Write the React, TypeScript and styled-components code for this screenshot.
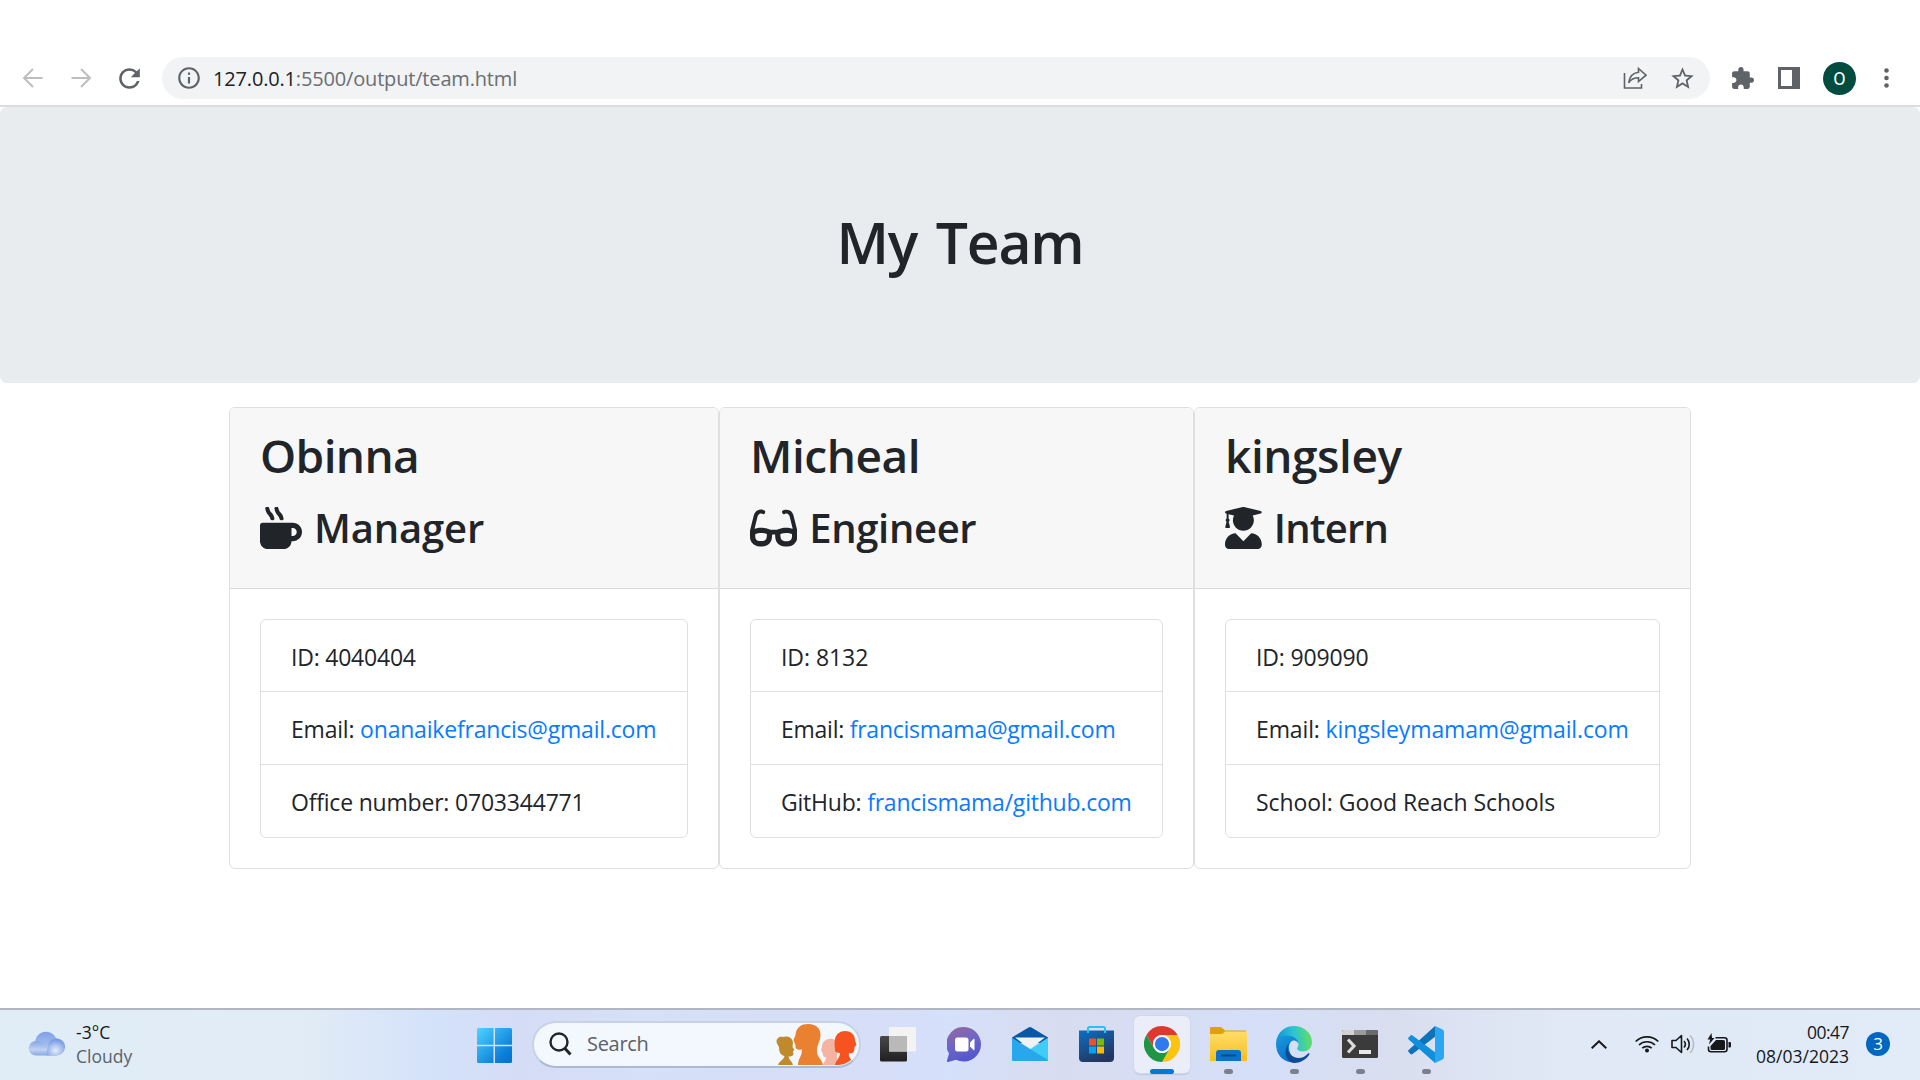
import React from "react";
import styled, { createGlobalStyle } from "styled-components";
import { FaMugHot, FaGlasses, FaUserGraduate } from "react-icons/fa";
import { MdRefresh, MdInfoOutline, MdStarBorder, MdExtension } from "react-icons/md";

const GlobalStyle = createGlobalStyle`
  * { box-sizing: border-box; }
  body { margin: 0; background: #fff; font-family: "Open Sans", "Noto Sans", sans-serif; color: #212529; }
  svg { display: block; flex: none; }
`;

const Screen = styled.div`
  width: 1920px;
  height: 1080px;
  display: flex;
  flex-direction: column;
  overflow: hidden;
`;

/* Browser toolbar */
const Toolbar = styled.header`
  height: 107px;
  flex: none;
  display: flex;
  align-items: center;
  padding: 57px 24px 6px 22px;
  border-bottom: 2px solid #dadcdf;
  color: #5f6368;
`;
const NavButtons = styled.nav`
  display: flex;
  align-items: center;
  width: 140px;
  gap: 26px;
  color: #bcbec0;
`;
const ReloadButton = styled.span`
  color: #5f6368;
  margin-left: -4px;
`;
const Omnibox = styled.div`
  width: 1548px;
  height: 42px;
  display: flex;
  align-items: center;
  padding: 0 14px 0 14px;
  border-radius: 21px;
  background: #f1f3f4;
`;
const Url = styled.span`
  flex: 1;
  margin: 1px 0 0 11px;
  font-size: 20px;
  line-height: 28px;
  letter-spacing: -0.17px;
  color: #6a6e73;
`;
const Host = styled.span`
  color: #202124;
`;
const OmniActions = styled.div`
  display: flex;
  align-items: center;
  gap: 22px;
`;
const ToolbarActions = styled.div`
  flex: 1;
  display: flex;
  align-items: center;
  justify-content: space-between;
  padding: 0 7px 0 20px;
`;
const Avatar = styled.span`
  width: 33px;
  height: 33px;
  border-radius: 50%;
  background: #004d40;
  color: #fff;
  font: 18px/33px Roboto, sans-serif;
  text-align: center;
  margin-right: 5px;
`;

/* Page */
const Jumbotron = styled.section`
  height: 276px;
  flex: none;
  padding-top: 99px;
  border-radius: 7px;
  background: #e9ecef;
`;
const PageTitle = styled.h1`
  margin: 0;
  font-size: 57px;
  line-height: 72px;
  font-weight: 600;
  letter-spacing: -1.2px;
  word-spacing: 5px;
  text-align: center;
`;
const Team = styled.main`
  flex: 1;
  display: flex;
  align-items: flex-start;
  padding: 24px 0 0 229px;
`;
const Card = styled.article<{ $width: number }>`
  width: ${(p) => p.$width}px;
  border: 1px solid #dfdfdf;
  border-radius: 6px;
  overflow: hidden;
`;
const CardHeader = styled.div`
  height: 181px;
  padding: 18px 30px 0;
  background: #f7f7f7;
  border-bottom: 1px solid #dadada;
`;
const Name = styled.h2<{ $track: number }>`
  margin: 0 0 19px;
  font-size: 46px;
  line-height: 58px;
  font-weight: 600;
  letter-spacing: ${(p) => p.$track}px;
`;
const Role = styled.h3<{ $track: number; $iconWidth: number }>`
  display: flex;
  align-items: center;
  gap: 12px;
  margin: 0;
  height: 50px;
  font-size: 40px;
  line-height: 50px;
  font-weight: 600;
  letter-spacing: ${(p) => p.$track}px;
  svg { width: ${(p) => p.$iconWidth}px; height: 42px; }
`;
const Details = styled.ul`
  list-style: none;
  margin: 30px;
  padding: 0;
  border: 1px solid #dfdfdf;
  border-radius: 6px;
`;
const Detail = styled.li<{ $track: number }>`
  height: 73px;
  padding: 2px 29px 0 30px;
  border-top: 1px solid #dfdfdf;
  font-size: 23px;
  line-height: 71px;
  letter-spacing: ${(p) => p.$track}px;
  white-space: nowrap;
  &:first-child { border-top: 0; height: 71px; }
`;
const Link = styled.a`
  color: #0a7aff;
`;

/* Taskbar */
const Taskbar = styled.footer`
  height: 72px;
  flex: none;
  display: flex;
  align-items: center;
  border-top: 2px solid #b0b7c3;
  background: linear-gradient(90deg, #e0edf6 0, #e2ecf6 300px, #d4e2fa 430px, #d5dcf6 520px, #d6e0f9 640px, #d7def7 850px, #d5e0fa 950px, #d8dcef 1060px, #d5dff8 1260px, #d9deef 1390px, #e0e9f5 1560px, #e1ecf8 1920px);
  color: #16181b;
  font-size: 17.5px;
  line-height: 24px;
`;
const Weather = styled.div`
  width: 477px;
  display: flex;
  align-items: center;
  gap: 11px;
  padding-left: 28px;
  padding-bottom: 3px;
`;
const Lines = styled.div<{ $align?: string }>`
  text-align: ${(p) => p.$align || "left"};
`;
const Muted = styled.div`
  color: #5b636b;
`;
const Time = styled.div`
  letter-spacing: -0.5px;
`;
const SearchBox = styled.div`
  width: 329px;
  height: 47px;
  margin: -2px 9px 0 20px;
  display: flex;
  align-items: center;
  padding: 0 2px 0 15px;
  border: 2px solid #c6d2e6;
  border-bottom-color: #adb9d0;
  border-radius: 24px;
  background: #f3f7fe;
  overflow: hidden;
`;
const SearchLabel = styled.span`
  flex: 1;
  margin-left: 15px;
  font-size: 20px;
  letter-spacing: -0.3px;
  color: #5d6066;
`;
const Apps = styled.div`
  display: flex;
  gap: 10px;
  margin-bottom: 2px;
`;
const AppTile = styled.div<{ $active?: boolean }>`
  position: relative;
  width: 56px;
  height: 57px;
  display: flex;
  align-items: center;
  justify-content: center;
  border-radius: 6px;
  background: ${(p) => (p.$active ? "#ebeef9" : "transparent")};
  box-shadow: ${(p) => (p.$active ? "0 0 0 1px #d0d7e8, 0 2px 1px #bfc8d9" : "none")};
`;
const Running = styled.i<{ $active?: boolean }>`
  position: absolute;
  bottom: -1px;
  width: ${(p) => (p.$active ? 24 : 9)}px;
  height: 5px;
  border-radius: 3px;
  background: ${(p) => (p.$active ? "#0078d7" : "#7c808c")};
`;
const Tray = styled.div`
  margin-left: auto;
  padding-right: 30px;
  padding-bottom: 2px;
  display: flex;
  align-items: center;
`;
const TrayIcons = styled.div`
  display: flex;
  align-items: center;
  gap: 12px;
  margin: 0 25px 0 28px;
`;
const Badge = styled.span`
  width: 24px;
  height: 24px;
  margin-left: 17px;
  border-radius: 50%;
  background: #0067c0;
  color: #fff;
  font-size: 17px;
  line-height: 24px;
  text-align: center;
`;

const Arrow = ({ flip }: { flip?: boolean }) => (
  <svg width="22" height="22" viewBox="0 0 22 22" fill="none" stroke="currentColor" strokeWidth="2" transform={flip ? "scale(-1 1)" : undefined}>
    <path d="M20.5 11H3M11 2 2 11l9 9" />
  </svg>
);
const ShareIcon = () => (
  <svg width="24" height="24" viewBox="0 0 24 24" fill="none" stroke="#5f6368" strokeWidth="1.6">
    <path d="M1.500 7v15h17v-4" />
    <path d="M15.500 2.500 23 9.200l-7.500 6.400v-3.800c-4.700 0-7.700 1.600-9.800 5C6.300 11 9.300 7 15.500 6.200z" strokeLinejoin="miter" />
  </svg>
);
const CloudIcon = () => (
  <svg width="37" height="25" viewBox="0 0 37 25">
    <defs>
      <linearGradient id="cl" x2="0" y2="1"><stop stopColor="#7fa0e6" /><stop offset="1" stopColor="#b8cdf0" /></linearGradient>
      <linearGradient id="cf" x2="0" y2="1"><stop stopColor="#86a6ea" /><stop offset=".6" stopColor="#c0d2f0" /><stop offset="1" stopColor="#87a8e8" /></linearGradient>
      <radialGradient id="cr" cx=".5" cy=".7" r=".6"><stop stopColor="#e4edfa" /><stop offset="1" stopColor="#7b9ce4" /></radialGradient>
    </defs>
    <circle cx="18" cy="11.500" r="10.800" fill="url(#cl)" />
    <path d="M8 10c4 0 6 2 8 4h13v10.500H8A7.200 7.200 0 0 1 8 10" fill="url(#cf)" />
    <path d="M20 14.500a8.600 8.600 0 1 1 8 10H18z" fill="url(#cr)" />
  </svg>
);
const StartIcon = () => (
  <svg width="35" height="35" viewBox="0 0 35 35">
    <defs><linearGradient id="win" x2="1" y2="1"><stop stopColor="#4fd4ff" /><stop offset=".75" stopColor="#0a7fd9" /><stop offset="1" stopColor="#0072cf" /></linearGradient></defs>
    <path fill="url(#win)" d="M1.500 0h15v16.800H0V1.500A1.500 1.500 0 0 1 1.500 0M18 0h15.500A1.500 1.500 0 0 1 35 1.500v15.300H18zM0 18.200h16.500V35h-15A1.500 1.500 0 0 1 0 33.500zm18 0h17v15.300a1.500 1.500 0 0 1-1.500 1.500H18z" />
  </svg>
);
const SearchIcon = () => (
  <svg width="23" height="24" viewBox="0 0 23 24" fill="none" stroke="#222426" strokeWidth="2.400">
    <circle cx="10" cy="10" r="8.500" /><path d="m15.500 16 6 6.500" strokeWidth="3" />
  </svg>
);
const PeopleArt = () => (
  <svg width="81" height="41" viewBox="0 0 81 41">
    <path fill="#c0892b" d="M2 41c1-4 6-5 6.500-9C4 31 3 27 3 23 2 21 1 20 .5 18c0-4 3-6 6.500-5 4-1.500 9 0 10 5l-.5 5 2 3-1.500 1 .5 3c-.5 2-2 2.500-5 2.500.5 4 4 5 4.500 8.500z" />
    <path fill="#f5b3a2" d="M47 41c.5-3 3-4 3-8-3 0-3-1-3-3l-2-4 1-3c0-6 5-9 11-8l4 2v24z" />
    <path fill="#e98130" d="M22 41c0-7 4-8 4-15.500-4 1-7 0-6.500-4L17.500 16l2-5C20 3 26 0 32 0c9 0 13 5.500 12.500 12-.5 6-4 9-3.500 16 0 5 5 7 6 13z" />
    <path fill="#f65321" d="M59 41c1-5 5-7 5-12-3 0-4-1-5-2 0-4-1-7 0-12 1-5 5-8 10-8s10 3 10 9l1.500 5-2 2c0 5-1 7-5.500 6-1 4 2 5 2 7-4 3-8 5-16 5" />
  </svg>
);
const TaskViewIcon = () => (
  <svg width="36" height="35" viewBox="0 0 36 35">
    <defs><linearGradient id="tv" x2="0" y2="1"><stop stopColor="#484848" /><stop offset="1" stopColor="#202020" /></linearGradient></defs>
    <rect y="9" width="27" height="25.500" rx="1.500" fill="url(#tv)" />
    <rect x="9" width="27" height="24.500" rx="1" fill="#f3f3f3" />
    <path d="M9 9h18v15.500H9z" fill="#b9b9b9" />
  </svg>
);
const ChatIcon = () => (
  <svg width="34" height="35" viewBox="0 0 34 35">
    <defs><linearGradient id="ch" x1=".2" x2=".6" y2="1"><stop stopColor="#94689f" /><stop offset=".5" stopColor="#6c65c9" /><stop offset="1" stopColor="#5056cc" /></linearGradient></defs>
    <path fill="url(#ch)" d="M17 0a17.300 17.300 0 1 1-8 32.800L1 35c-1 .3-1.500-.5-1-1.500l2-7A17.300 17.300 0 0 1 17 0" />
    <rect x="8" y="10.500" width="13.500" height="14" rx="2.500" fill="#fff" />
    <path d="m23 15.500 3.500-3.500c.8-.6 1-.2 1 .5v10c0 .7-.2 1-1 .5L23 19.500z" fill="#fff" />
  </svg>
);
const MailIcon = () => (
  <svg width="36" height="34" viewBox="0 0 36 34">
    <path fill="#0a57a8" d="M0 10.500 16.500.5q1.500-1 3 0L36 10.500V16H0z" />
    <path fill="#f1f2f4" d="M3 10.500h30L18 22z" />
    <path fill="#40cdf5" d="M36 10.800V34L17 23z" />
    <path fill="#28a8ea" d="M0 10.800 36 33q0 1-1 1H1q-1 0-1-1z" />
  </svg>
);
const StoreIcon = () => (
  <svg width="35" height="36" viewBox="0 0 35 36">
    <defs><linearGradient id="st" x2=".5" y2="1"><stop stopColor="#0c6fc6" /><stop offset="1" stopColor="#23365f" /></linearGradient></defs>
    <path fill="url(#st)" d="M0 4.500h35V32q0 4-4 4H4q-4 0-4-4z" />
    <path d="M9 7V2.500Q9 1 10.500 1h14Q26 1 26 2.500V7" fill="none" stroke="#2cc0f5" strokeWidth="2" />
    <path fill="#f25022" d="M10 12.500h7v7h-7z" /><path fill="#7fba00" d="M18 12.500h7v7h-7z" />
    <path fill="#00a4ef" d="M10 20.500h7v7h-7z" /><path fill="#ffb900" d="M18 20.500h7v7h-7z" />
  </svg>
);
const ChromeIcon = () => (
  <svg width="36" height="36" viewBox="0 0 48 48">
    <path fill="#dd3a2f" d="M24 0c8.900 0 16.600 4.800 20.800 12H24a12 12 0 0 0-10.400 18L3.200 12A24 24 0 0 1 24 0" />
    <path fill="#fdc40e" d="M44.800 12A24 24 0 0 1 24 48l10.400-18A12 12 0 0 0 24 12z" />
    <path fill="#209547" d="M24 48A24 24 0 0 1 3.200 12l10.400 18a12 12 0 0 0 20.800 0z" />
    <circle cx="24" cy="24" r="12" fill="#fff" /><circle cx="24" cy="24" r="9.500" fill="#2f7aec" />
  </svg>
);
const FolderIcon = () => (
  <svg width="37" height="34" viewBox="0 0 37 34">
    <defs><linearGradient id="fo" x2="0" y2="1"><stop stopColor="#ffdd6b" /><stop offset="1" stopColor="#f9bd1d" /></linearGradient></defs>
    <path fill="#dfa009" d="M0 1q0-1 1-1h10l4 3.500h21v7H0z" />
    <path fill="url(#fo)" d="M0 7h11q2 0 4-2.500h21q1 0 1 1V33q0 1-1 1H1q-1 0-1-1z" />
    <path fill="#0c71c7" d="M6 34V26q0-3 3-3h19q3 0 3 3v8z" />
    <path stroke="#08467f" strokeWidth="1.800" d="M11 28.500h15" />
  </svg>
);
const EdgeIcon = () => (
  <svg width="36" height="37" viewBox="0 0 36 37">
    <defs>
      <linearGradient id="e1" y1=".5" x2="1" y2=".4"><stop stopColor="#1492d8" /><stop offset=".5" stopColor="#2cc3d5" /><stop offset="1" stopColor="#63e05c" /></linearGradient>
      <linearGradient id="e2" x2=".5" y2="1"><stop stopColor="#1a9bdc" /><stop offset="1" stopColor="#0a6fc9" /></linearGradient>
    </defs>
    <path fill="url(#e1)" d="M0 17C1 6 9 0 18 0c10 0 18 7 18 16 0 6-4 9.500-9 9.500-4 0-6-1.500-6-3 0-1 1.500-2 1.500-4 0-3-3-6-6-6z" />
    <path fill="url(#e2)" d="M0 18C1 12 6 9.500 11 9.500c7 0 11 4 11.500 8C21 15 19 14 17 14.500c-6 2-6 15 5 20.500-2 2-4 1.500-7 1.300C6 35 0 28 0 18" />
    <path fill="#104a95" d="M17 14.500c-8 4-6 13 1 16.500 6 2.500 11 0 14-3.500 1-.8 1.800 0 1.300 1C30 34 24 37 18 37 8 35 6 20 17 14.500" />
  </svg>
);
const TerminalIcon = () => (
  <svg width="36" height="28" viewBox="0 0 36 28">
    <rect width="36" height="28" rx="1.500" fill="#3b3b3b" />
    <path fill="#d2d2d2" d="M1.500 0H12v5H0V1.500Q0 0 1.500 0" /><path fill="#9b9b9b" d="M12 0h12v5H12z" /><path fill="#6a6a6a" d="M24 0h10.500Q36 0 36 1.500V5H24z" />
    <path d="m6 9.500 6 6.500-6 6.500" fill="none" stroke="#dcdcdc" strokeWidth="3.200" />
    <path fill="#e8e8e8" d="M17 20h12v4H17z" />
  </svg>
);
const VsCodeIcon = () => (
  <svg width="36" height="37" viewBox="0 0 36 37">
    <path fill="#0d72b8" d="m27 0 1 10L4.500 28q-1 .8-2 0L.6 26q-1-1 0-2z" />
    <path fill="#118fdc" d="m27 37 1-10L4.500 9.500q-1-.8-2 0L.6 11.500q-1 1 0 2z" />
    <path fill="#2aa6f2" d="M27 0l7.500 3.500Q36 4.300 36 6v25q0 1.700-1.500 2.500L27 37z" />
  </svg>
);

const ChevronUp = () => <svg width="16" height="9" viewBox="0 0 16 9" fill="none" stroke="#16181b" strokeWidth="2"><path d="m.7 8.300 7.300-7 7.300 7" /></svg>;
const WifiIcon = () => (
  <svg width="24" height="18" viewBox="0 0 24 18" fill="none" stroke="#16181b" strokeWidth="1.700">
    <path d="M.7 6.500a16 16 0 0 1 22.600 0M4 10a11.500 11.500 0 0 1 16 0M7.300 13.200a6.800 6.800 0 0 1 9.400 0" /><circle cx="12" cy="15.500" r="2" fill="#16181b" stroke="none" />
  </svg>
);
const SpeakerIcon = () => (
  <svg width="24" height="20" viewBox="0 0 24 20" fill="none" stroke="#16181b" strokeWidth="1.600">
    <path d="M1 6.500h4L10.500 1.500v17L5 13.500H1z" strokeLinejoin="round" /><path d="M13 7a5 5 0 0 1 0 6.500M16 4.500a8.500 8.500 0 0 1 0 11.500" /><path stroke="#b5bec8" d="M19 1.500a12.500 12.500 0 0 1 0 17.500" />
  </svg>
);
const BatteryIcon = () => (
  <svg width="24" height="23" viewBox="0 0 24 23">
    <path d="M8.500 4.800H17.500a2.500 2.500 0 0 1 2.500 2.500v9a2.500 2.500 0 0 1-2.500 2.500H4A2.500 2.500 0 0 1 1.500 16.300V13.500" fill="none" stroke="#16181b" strokeWidth="1.600" />
    <path fill="#16181b" d="M9 7h7.500Q18 7 18 8.500v7q0 1.500-1.500 1.500H5q-1.500 0-1.500-1.500V13zM21.500 9H23q1 0 1 1v3.500q0 1-1 1h-1.500zM4.500 0 .5 6.500h2.700L2 11.500 7.500 5H5z" />
  </svg>
);

const team = [
  {
    name: "Obinna", nameTrack: -0.6, width: 490, role: "Manager", roleTrack: -0.15, icon: <FaMugHot />, iconWidth: 42,
    details: [
      { label: "ID: 4040404", track: -0.22 },
      { label: "Email: ", link: "onanaikefrancis@gmail.com", track: -0.2 },
      { label: "Office number: 0703344771", track: -0.2 },
    ],
  },
  {
    name: "Micheal", nameTrack: -0.45, width: 475, role: "Engineer", roleTrack: -0.35, icon: <FaGlasses />, iconWidth: 47.25,
    details: [
      { label: "ID: 8132", track: -0.06 },
      { label: "Email: ", link: "francismama@gmail.com", track: -0.25 },
      { label: "GitHub: ", link: "francismama/github.com", track: -0.22 },
    ],
  },
  {
    name: "kingsley", nameTrack: -0.45, width: 497, role: "Intern", roleTrack: -0.8, icon: <FaUserGraduate />, iconWidth: 36.75,
    details: [
      { label: "ID: 909090", track: -0.15 },
      { label: "Email: ", link: "kingsleymamam@gmail.com", track: -0.13 },
      { label: "School: Good Reach Schools", track: -0.06 },
    ],
  },
];

const apps = [
  { id: "tasks", icon: <TaskViewIcon /> },
  { id: "chat", icon: <ChatIcon /> },
  { id: "mail", icon: <MailIcon /> },
  { id: "store", icon: <StoreIcon /> },
  { id: "chrome", icon: <ChromeIcon />, running: true, active: true },
  { id: "files", icon: <FolderIcon />, running: true },
  { id: "edge", icon: <EdgeIcon />, running: true },
  { id: "terminal", icon: <TerminalIcon />, running: true },
  { id: "code", icon: <VsCodeIcon />, running: true },
];

export default function App() {
  return (
    <Screen>
      <GlobalStyle />
      <Toolbar>
        <NavButtons>
          <Arrow />
          <Arrow flip />
          <ReloadButton><MdRefresh size={31} /></ReloadButton>
        </NavButtons>
        <Omnibox>
          <MdInfoOutline size={26} />
          <Url><Host>127.0.0.1</Host>:5500/output/team.html</Url>
          <OmniActions>
            <ShareIcon />
            <MdStarBorder size={27} />
          </OmniActions>
        </Omnibox>
        <ToolbarActions>
          <MdExtension size={25} />
          <svg width="22" height="22" viewBox="0 0 22 22"><path fill="#5f6368" fillRule="evenodd" d="M0 0h22v22H0zM3 3v16h11V3z" /></svg>
          <Avatar>O</Avatar>
          <svg width="5" height="20" viewBox="0 0 5 20" fill="#5f6368"><circle cx="2.500" cy="2.500" r="2.300" /><circle cx="2.500" cy="10" r="2.300" /><circle cx="2.500" cy="17.500" r="2.300" /></svg>
        </ToolbarActions>
      </Toolbar>
      <Jumbotron>
        <PageTitle>My Team</PageTitle>
      </Jumbotron>
      <Team>
        {team.map((m) => (
          <Card key={m.name} $width={m.width}>
            <CardHeader>
              <Name $track={m.nameTrack}>{m.name}</Name>
              <Role $track={m.roleTrack} $iconWidth={m.iconWidth}>{m.icon}<span>{m.role}</span></Role>
            </CardHeader>
            <Details>
              {m.details.map((d) => (
                <Detail key={d.label} $track={d.track}>{d.label}{d.link && <Link>{d.link}</Link>}</Detail>
              ))}
            </Details>
          </Card>
        ))}
      </Team>
      <Taskbar>
        <Weather>
          <CloudIcon />
          <Lines>
            <div>-3°C</div>
            <Muted>Cloudy</Muted>
          </Lines>
        </Weather>
        <StartIcon />
        <SearchBox>
          <SearchIcon />
          <SearchLabel>Search</SearchLabel>
          <PeopleArt />
        </SearchBox>
        <Apps>
          {apps.map((a) => (
            <AppTile key={a.id} $active={a.active}>
              {a.icon}
              {a.running && <Running $active={a.active} />}
            </AppTile>
          ))}
        </Apps>
        <Tray>
          <ChevronUp />
          <TrayIcons>
            <WifiIcon />
            <SpeakerIcon />
            <BatteryIcon />
          </TrayIcons>
          <Lines $align="right">
            <Time>00:47</Time>
            <div>08/03/2023</div>
          </Lines>
          <Badge>3</Badge>
        </Tray>
      </Taskbar>
    </Screen>
  );
}
